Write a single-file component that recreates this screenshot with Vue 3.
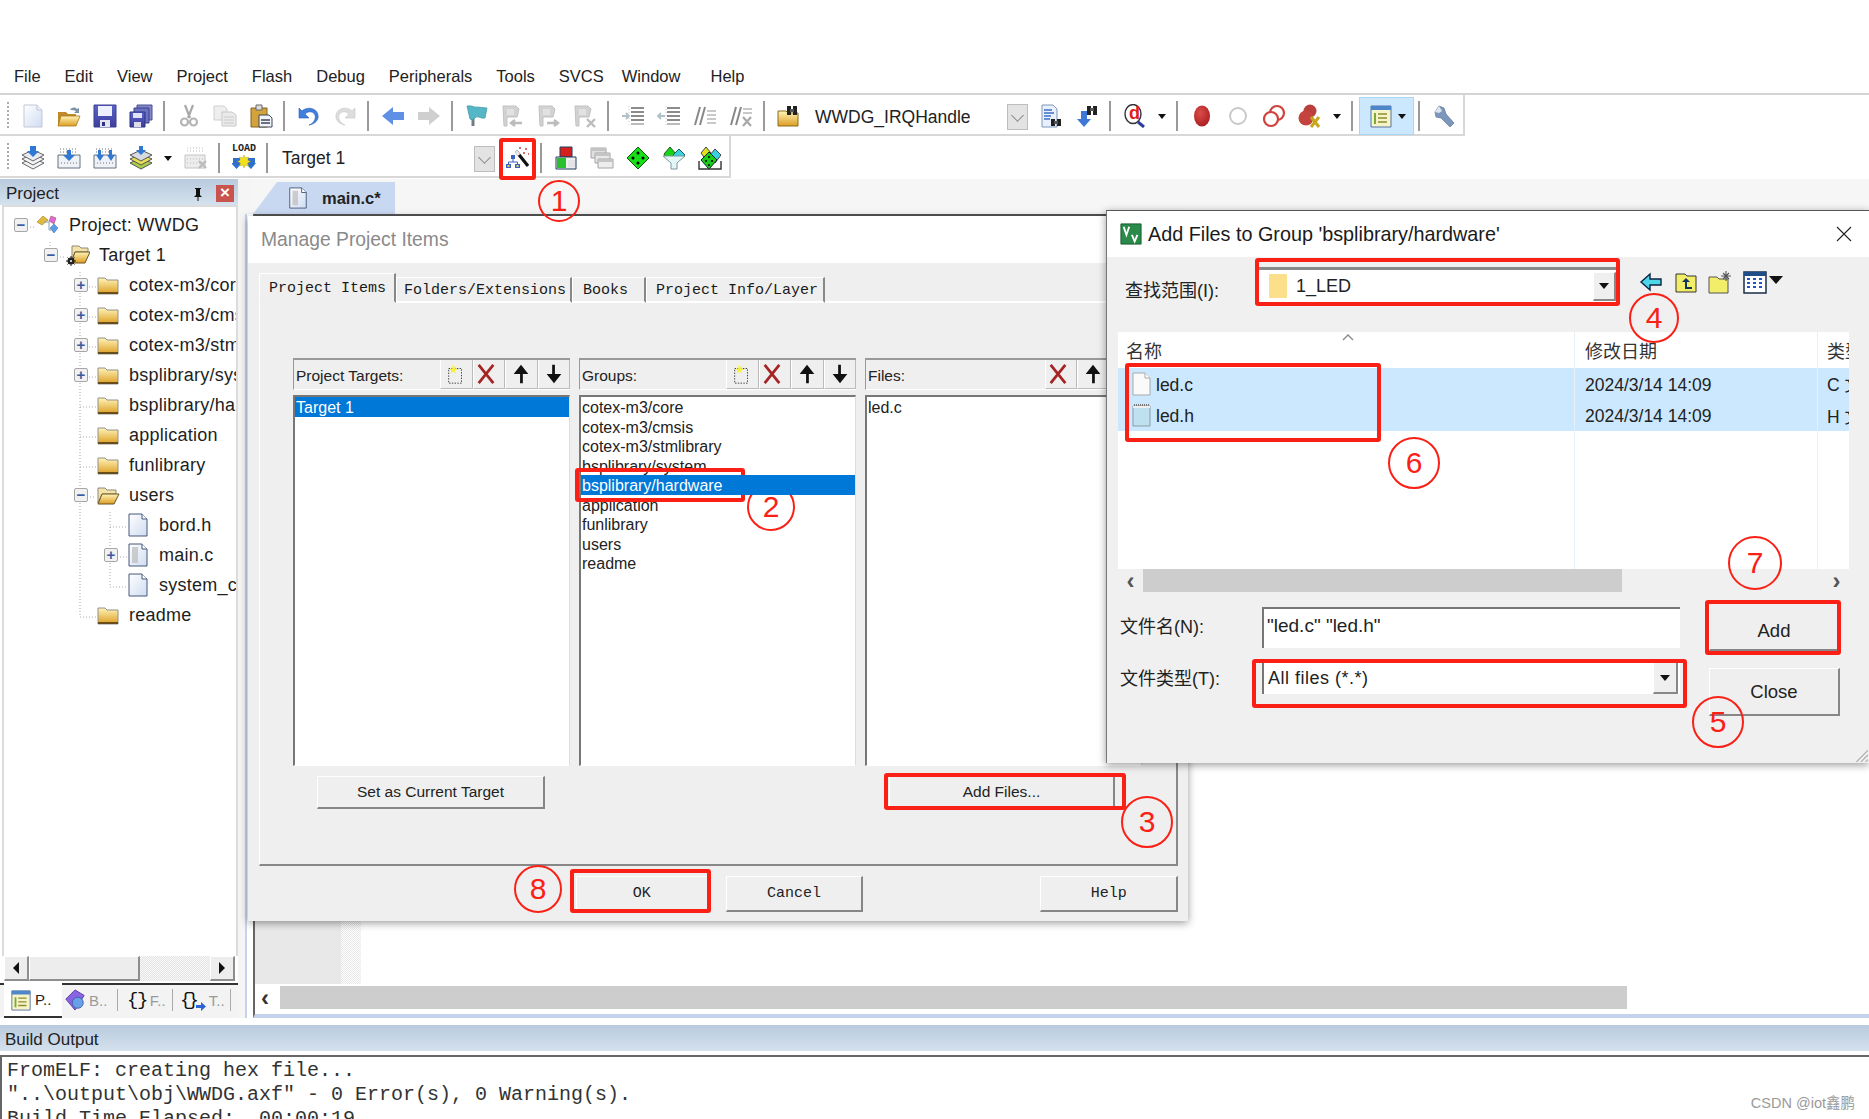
<template>
  <div class="page">
    <!-- icon sprite -->
    <svg class="sprite" width="0" height="0" aria-hidden="true">
      <defs>
        <linearGradient id="g-folder" x1="0" y1="0" x2="0" y2="1"><stop offset="0" stop-color="#fff4b8" /><stop offset="1" stop-color="#dd9d22" /></linearGradient>
        <linearGradient id="g-page" x1="0" y1="0" x2="1" y2="1"><stop offset="0" stop-color="#fff" /><stop offset="1" stop-color="#cfdcf2" /></linearGradient>
        <linearGradient id="g-save" x1="0" y1="0" x2="0" y2="1"><stop offset="0" stop-color="#5a63c8" /><stop offset="1" stop-color="#3e3f9c" /></linearGradient>
        <radialGradient id="g-bp" cx=".4" cy=".35" r=".7"><stop offset="0" stop-color="#dc4b48" /><stop offset="1" stop-color="#a81f20" /></radialGradient>
      </defs>
      <symbol id="i-new" viewBox="0 0 24 24"><path d="M3 1h13l5 5v17H3z" fill="url(#g-page)" stroke="#c3c7d2" /><path d="M16 1v5h5" fill="#eef" stroke="#c3c7d2" /></symbol>
      <symbol id="i-open" viewBox="0 0 24 24"><path d="M1 8h8l2 2h8v11H1z" fill="#c08a2c" /><path d="M4 12h19l-4 10H1z" fill="url(#g-folder)" stroke="#a87818" stroke-width=".8" /><path d="M13 6c2-3 5-3 7-1l2-1v5h-5l2-2c-2-1-4-1-6-1z" fill="#7f93a8" /></symbol>
      <symbol id="i-save" viewBox="0 0 24 24"><path d="M1 1h22v22H1z" fill="url(#g-save)" stroke="#3a3f8e" /><path d="M5 2h14v10H5z" fill="#eef0ff" /><path d="M7 16h10v7H7z" fill="#e4e4ee" /><path d="M9 18h3v4H9z" fill="#2d3483" /></symbol>
      <symbol id="i-saveall" viewBox="0 0 24 24"><path d="M8 1h15v15H8z" fill="#8288c8" stroke="#4a4f93" /><path d="M5 4h15v15H5z" fill="#6b72c2" stroke="#3a4088" /><path d="M1 8h15v15H1z" fill="url(#g-save)" stroke="#2d3483" /><path d="M4 9h9v5H4z" fill="#dfe2f8" /><path d="M5 18h7v5H5z" fill="#dcdcea" /></symbol>
      <symbol id="i-cut" viewBox="0 0 24 24"><path d="M8 1l5 13M16 1l-5 13" stroke="#a9a9a9" stroke-width="2.2" fill="none" /><circle cx="7.500" cy="18" r="3.500" fill="none" stroke="#b5b5b5" stroke-width="2.200" /><circle cx="16.500" cy="18" r="3.500" fill="none" stroke="#b5b5b5" stroke-width="2.200" /></symbol>
      <symbol id="i-copy" viewBox="0 0 24 24"><path d="M1 2h10l3 3v11H1z" fill="#eee" stroke="#d0d0d0" /><path d="M9 8h10l4 3v11H9z" fill="#ebebeb" stroke="#c8c8c8" /><path d="M11 13h10M11 16h10M11 19h10" stroke="#c9c9c9" /></symbol>
      <symbol id="i-paste" viewBox="0 0 24 24"><path d="M2 4h16v19H2z" fill="#d2a33c" stroke="#83631d" /><path d="M7 1h6v5H7z" fill="#ddd" stroke="#666" /><path d="M10 11h10l3 3v9H10z" fill="#f1f4fb" stroke="#3f4656" /><path d="M12 16h9M12 19h9" stroke="#3f4656" stroke-width="1.400" /></symbol>
      <symbol id="i-undo" viewBox="0 0 24 24"><path d="M8 10c5-5 12-1 10 5-1 3-3 5-6 6 6-1 10-5 9-10C20 4 10 2 5 7L2 4v10h10z" fill="#3f7fde" stroke="#2b5fb5" stroke-width=".6" /></symbol>
      <symbol id="i-redo" viewBox="0 0 24 24"><path d="M16 10c-5-5-12-1-10 5 1 3 3 5 6 6-6-1-10-5-9-10C4 4 14 2 19 7l3-3v10H12z" fill="#ddd" stroke="#c6c6c6" stroke-width=".6" /></symbol>
      <symbol id="i-back" viewBox="0 0 24 24"><path d="M1 12L12 3v5h11v8H12v5z" fill="#5f90e6" /></symbol>
      <symbol id="i-fwd" viewBox="0 0 24 24"><path d="M23 12L12 3v5H1v8h11v5z" fill="#cfcfcf" /></symbol>
      <symbol id="i-flag" viewBox="0 0 24 24"><path d="M8 12v10" stroke="#6f7d80" stroke-width="3" /><path d="M2 2c5-1 8 2 10 1l10 1-2 10c-4 1-6-2-9-1l-3 3-3-1z" fill="#55b7c6" stroke="#3b93a3" stroke-width=".7" /></symbol>
      <symbol id="i-flagl" viewBox="0 0 24 24"><path d="M2 2h13l3 3-2 8H6v9H3z" fill="#d2d2d2" stroke="#c2c2c2" /><path d="M6 5h7v6H6z" fill="#e2e2e2" /><path d="M21 19H11M14 16l-4 3 4 3" stroke="#bcbcbc" stroke-width="2.400" fill="none" /></symbol>
      <symbol id="i-flagr" viewBox="0 0 24 24"><path d="M2 2h13l3 3-2 8H6v9H3z" fill="#d2d2d2" stroke="#c2c2c2" /><path d="M6 5h7v6H6z" fill="#e2e2e2" /><path d="M10 19h10M17 16l4 3-4 3" stroke="#bcbcbc" stroke-width="2.400" fill="none" /></symbol>
      <symbol id="i-flagx" viewBox="0 0 24 24"><path d="M2 2h13l3 3-2 8H6v9H3z" fill="#d2d2d2" stroke="#c2c2c2" /><path d="M6 5h7v6H6z" fill="#e2e2e2" /><path d="M14 15l8 8M22 15l-8 8" stroke="#bcbcbc" stroke-width="2.400" /></symbol>
      <symbol id="i-indent" viewBox="0 0 24 24"><path d="M10 4h13M10 8h13M10 12h13M10 16h13" stroke="#8c8c8c" stroke-width="1.800" /><path d="M10 20h13" stroke="#b5b5b5" stroke-width="1.800" /><path d="M1 12h6M5 9l3 3-3 3" stroke="#b0c0c8" stroke-width="1.800" fill="none" /><path d="M8 2v20" stroke="#ccc" stroke-dasharray="1 2" /></symbol>
      <symbol id="i-outdent" viewBox="0 0 24 24"><path d="M10 4h13M10 8h13M10 12h13M10 16h13" stroke="#8c8c8c" stroke-width="1.800" /><path d="M10 20h13" stroke="#b5b5b5" stroke-width="1.800" /><path d="M8 12H2M4 9l-3 3 3 3" stroke="#b0c0c8" stroke-width="1.800" fill="none" /><path d="M9 2v20" stroke="#ccc" stroke-dasharray="1 2" /></symbol>
      <symbol id="i-comment" viewBox="0 0 24 24"><path d="M7 3L2 21M12 3L7 21" stroke="#888" stroke-width="2" /><path d="M14 7h9M14 11h9M14 15h9M14 19h9" stroke="#b8b8b8" stroke-width="1.600" /></symbol>
      <symbol id="i-uncomment" viewBox="0 0 24 24"><path d="M7 3L2 21M12 3L7 21" stroke="#888" stroke-width="2" /><path d="M14 5h9M14 9h9" stroke="#b8b8b8" stroke-width="1.600" /><path d="M14 13l8 9M22 13l-8 9" stroke="#a9a9a9" stroke-width="2.200" /></symbol>
      <symbol id="i-findfolder" viewBox="0 0 24 24"><path d="M1 7h8l2 2h10v13H1z" fill="url(#g-folder)" stroke="#8d6a1c" /><path d="M10 2h4v9h-4zM16 2h4v9h-4z" fill="#222" /><path d="M13 5h4v3h-4z" fill="#555" /></symbol>
      <symbol id="i-findpage" viewBox="0 0 24 24"><path d="M3 1h11l4 4v18H3z" fill="#e8f0fd" stroke="#7f95bb" /><path d="M5 6h8M5 9h10M5 12h7M5 15h6" stroke="#3d6fc4" stroke-width="1.400" /><path d="M12 15h4v7h-4zM18 15h4v7h-4z" fill="#222" /><path d="M15 17h4v3h-4z" fill="#555" /></symbol>
      <symbol id="i-findnext" viewBox="0 0 24 24"><path d="M3 8h6v8h4l-7 8-7-8h4z" fill="#3f77d8" transform="translate(3 -1)" /><path d="M12 2h4v9h-4zM18 2h4v9h-4z" fill="#222" /><path d="M15 4h4v3h-4z" fill="#555" /></symbol>
      <symbol id="i-debug" viewBox="0 0 24 24"><ellipse cx="10" cy="10" rx="8" ry="9.500" fill="#fff" stroke="#333" stroke-width="1.400" /><path d="M15 18l6 5" stroke="#2c3e9b" stroke-width="3" /></symbol>
      <symbol id="i-bp" viewBox="0 0 24 24"><ellipse cx="12" cy="12" rx="8" ry="10.500" fill="url(#g-bp)" /></symbol>
      <symbol id="i-bpoff" viewBox="0 0 24 24"><circle cx="12" cy="12" r="8" fill="#fff" stroke="#c9c9c9" stroke-width="2" /></symbol>
      <symbol id="i-bps" viewBox="0 0 24 24"><circle cx="15" cy="9" r="7" fill="#fff" stroke="#d0423c" stroke-width="2.200" /><circle cx="9" cy="15" r="7" fill="#fff" stroke="#d0423c" stroke-width="2.200" /></symbol>
      <symbol id="i-bpx" viewBox="0 0 24 24"><circle cx="12" cy="7" r="6.500" fill="#b9403c" /><circle cx="8" cy="14" r="7.500" fill="#c4433e" /><path d="M13 13l8 10M21 13l-8 10" stroke="#c9a71d" stroke-width="3" /></symbol>
      <symbol id="i-window" viewBox="0 0 24 24"><path d="M2 2h20v21H2z" fill="#f6f3c8" stroke="#5874a4" /><path d="M2 2h20v4H2z" fill="#4d86c9" /><path d="M5 9h2v11H5z" fill="#7ca83a" /><path d="M9 10h9M9 14h9M9 18h9" stroke="#8a8f2e" stroke-width="1.400" /></symbol>
      <symbol id="i-wrench" viewBox="0 0 24 24"><path d="M3 8l4-6 5 2 2 6 8 9-4 4-9-9-5-1z" fill="#7c97bb" stroke="#5c7698" stroke-width=".7" /><path d="M7 2l3 5-3 2-4-1" fill="#fff" opacity=".75" /></symbol>
      <symbol id="i-translate" viewBox="0 0 24 24"><path d="M12 12l11 5-11 6L1 17z" fill="#f2f4f6" stroke="#666" /><path d="M12 8l11 5-11 6L1 13z" fill="#f2f4f6" stroke="#666" /><path d="M12 4l11 5-11 6L1 9z" fill="#e8ecf0" stroke="#666" /><path d="M9 0h6v5h3l-6 6-6-6h3z" fill="#2f78d4" /></symbol>
      <symbol id="i-build" viewBox="0 0 24 24"><path d="M1 9h22v13H1z" fill="#eef1f5" stroke="#69727f" /><path d="M3 3h18M3 6h18M4 17h16" stroke="#6d7480" stroke-dasharray="1 2" /><path d="M10 4h4v5h4l-6 6-6-6h4z" fill="#2f78d4" /></symbol>
      <symbol id="i-rebuild" viewBox="0 0 24 24"><path d="M1 9h22v13H1z" fill="#eef1f5" stroke="#69727f" /><path d="M3 3h18M3 6h18M4 17h16" stroke="#6d7480" stroke-dasharray="1 2" /><path d="M5 4h3v5h3l-4 6-4-6h2zM16 4h3v5h3l-4 6-4-6h2z" fill="#2f78d4" /></symbol>
      <symbol id="i-batch" viewBox="0 0 24 24"><path d="M12 12l11 5-11 6L1 17z" fill="#a8cc4a" stroke="#555" /><path d="M12 8l11 5-11 6L1 13z" fill="#e8dd55" stroke="#555" /><path d="M12 4l11 5-11 6L1 9z" fill="#d6dbe0" stroke="#555" /><path d="M10 0h4v4h3l-5 5-5-5h3z" fill="#2f78d4" /></symbol>
      <symbol id="i-stop" viewBox="0 0 24 24"><path d="M1 9h20v13H1z" fill="#ececec" stroke="#c4c4c4" /><path d="M3 2h18M3 5h18M3 13h16M3 17h16" stroke="#bcbcbc" stroke-dasharray="1 2" /><path d="M15 15l7 7M22 15l-7 7" stroke="#bbb" stroke-width="2.400" /></symbol>
      <symbol id="i-load" viewBox="0 0 24 24"><path d="M1 12h7v5h2l-5.500 6L-1 17h2zM16 12h7v5h1l-5 6-6-6h3z" fill="#2f6fd0" /><path d="M12 9l1.500 3 3-1-1 3 3 1.500-3 1.500 1 3-3-1-1.500 3-1.500-3-3 1 1-3-3-1.500 3-1.500-1-3 3 1z" fill="#f3e01c" stroke="#a79a10" stroke-width=".4" /></symbol>
      <symbol id="i-wand" viewBox="0 0 24 24"><path d="M10 5l12 15" stroke="#111" stroke-width="3.200" /><path d="M10 5l3 4" stroke="#e8e8e8" stroke-width="3.200" /><path d="M13 2h2M19 3h2M17 7h2M22 8h1" stroke="#d63a3a" stroke-width="1.600" /><path d="M5 9h4v4H5zM0 18h5v4H0zM9 18h5v4H9z" fill="#3a62c6" /><path d="M7 13v3M2.500 18v-2h9v2" stroke="#3a62c6" fill="none" /><path d="M1.500 19h2v2h-2zM10.500 19h2v2h-2z" fill="#e8d94a" /></symbol>
      <symbol id="i-comps" viewBox="0 0 24 24"><path d="M6 1h12v10H6z" fill="#d62020" stroke="#1f3c5c" /><path d="M2 11h20v12H2z" fill="#eee" stroke="#1f3c5c" /><path d="M3 12h9v10H3z" fill="#2bc02b" /><path d="M14 14h7v7h-7z" fill="#e3e3e8" /></symbol>
      <symbol id="i-stack" viewBox="0 0 24 24"><path d="M1 2h15v10H1z" fill="#e0e0e0" stroke="#a4a4a4" /><path d="M5 7h15v10H5z" fill="#e8e8e8" stroke="#a4a4a4" /><path d="M8 13h15v9H8z" fill="#ededed" stroke="#a4a4a4" /><path d="M1 2h15v3H1zM5 7h15v3H5zM8 13h15v3H8z" fill="#c4c4c4" /></symbol>
      <symbol id="i-gem" viewBox="0 0 24 24"><path d="M12 1l11 11-11 11L1 12z" fill="#18e018" stroke="#145214" /><circle cx="12" cy="7" r="1.500" /><circle cx="7" cy="12" r="1.500" /><circle cx="17" cy="12" r="1.500" /><circle cx="12" cy="17" r="1.500" /></symbol>
      <symbol id="i-funnel" viewBox="0 0 24 24"><path d="M8 1l6 7-5 4H4L2 8z" fill="#17d417" stroke="#185a18" /><path d="M17 3l6 6-3 3h-8l-1-3z" fill="#37d2e0" stroke="#185a5a" /><path d="M1 10h22l-8 7v6H9v-6z" fill="#e4f6f7" stroke="#7d9a9c" /></symbol>
      <symbol id="i-multi" viewBox="0 0 24 24"><path d="M8 1l5 6-5 7-5-7z" fill="#e0e020" stroke="#444" /><path d="M17 3l6 6-6 8-5-8z" fill="#37d2e0" stroke="#444" /><path d="M11 6l8 8-8 9-8-9z" fill="#18cc18" stroke="#123" /><path d="M1 15v8h22v-8" fill="none" stroke="#333" stroke-width="1.400" /><circle cx="11" cy="11" r="1" /><circle cx="8" cy="15" r="1" /><circle cx="14" cy="15" r="1" /><circle cx="11" cy="19" r="1" /></symbol>
      <symbol id="i-proj" viewBox="0 0 24 24"><path d="M1 9l6-6 5 4-6 5z" fill="#e2b93c" stroke="#9c7f20" stroke-width=".6" /><path d="M15 3l5 2-2 6-5-3z" fill="#dc6bd8" stroke="#944" stroke-width=".5" /><path d="M14 15l4-4 4 4-4 5z" fill="#5c9ce8" stroke="#36689e" stroke-width=".5" /><path d="M8 9h5v8h2" fill="none" stroke="#8aa0b8" /></symbol>
      <symbol id="i-folder" viewBox="0 0 24 24"><path d="M2 5h7l2 2h11v14H2z" fill="url(#g-folder)" stroke="#92918a" /><path d="M2 20h20" stroke="#4f3a12" stroke-width="1.600" /></symbol>
      <symbol id="i-folderopen" viewBox="0 0 24 24"><path d="M2 5h7l2 2h9v4H6L2 20z" fill="#f4e3a8" stroke="#8d8a7a" /><path d="M6 11h17l-5 10H2z" fill="url(#g-folder)" stroke="#6b5420" /></symbol>
      <symbol id="i-target" viewBox="0 0 24 24"><path d="M6 3h7l2 2h7v4H9L6 16z" fill="#f4e3a8" stroke="#8d8a7a" /><path d="M9 9h15l-5 11H5z" fill="url(#g-folder)" stroke="#6b5420" /><circle cx="5" cy="18" r="3.500" fill="#222" /><path d="M5 13v10M0 18h10M1.500 14.500l7 7M8.500 14.500l-7 7" stroke="#222" /><circle cx="5" cy="18" r="1" fill="#fff" /></symbol>
      <symbol id="i-file" viewBox="0 0 24 24"><path d="M3 1h13l5 5v17H3z" fill="url(#g-page)" stroke="#46597a" /><path d="M16 1v5h5" fill="#fff" stroke="#46597a" /></symbol>
      <symbol id="i-filec" viewBox="0 0 24 24"><path d="M3 1h13l5 5v17H3z" fill="url(#g-page)" stroke="#46597a" /><path d="M16 1v5h5" fill="#fff" stroke="#46597a" /><path d="M6 4h6v16H6z" fill="#bbb" opacity=".7" /></symbol>
      <symbol id="i-book" viewBox="0 0 24 24"><path d="M2 11L12 1l10 6-10 16z" fill="#8a63e0" stroke="#5a36a8" /><circle cx="15" cy="15" r="6" fill="#6aa0e8" stroke="#3d5fa8" /></symbol>
      <symbol id="i-back2" viewBox="0 0 24 24"><path d="M2 12l9-8v5h11v6H11v5z" fill="#4cd6e8" stroke="#0c2240" stroke-width="1.400" /></symbol>
      <symbol id="i-up2" viewBox="0 0 24 24"><path d="M2 4h9l2 2h9v16H2z" fill="#f3ee6a" stroke="#333" /><path d="M12 8l4 4h-3v5h5v2h-7v-7H8z" fill="#12355c" /></symbol>
      <symbol id="i-new2" viewBox="0 0 24 24"><path d="M1 7h8l2 2h9v14H1z" fill="#f3ee6a" stroke="#555" /><path d="M18 1v10M13 6h10M15 3l6 6M21 3l-6 6" stroke="#555" stroke-width="1.100" /></symbol>
      <symbol id="i-view2" viewBox="0 0 24 24"><path d="M1 2h22v21H1z" fill="#fff" stroke="#1a2d4a" stroke-width="1.500" /><path d="M1 2h22v4H1z" fill="#1f4d8a" /><path d="M4 9h3M10 9h3M16 9h3M4 13h3M10 13h3M16 13h3M4 17h3M10 17h3M16 17h3" stroke="#2452c8" stroke-width="2" /></symbol>
      <symbol id="i-uv" viewBox="0 0 24 24"><path d="M1 1h22v22H1z" fill="#2a8a4a" stroke="#145a2c" /><path d="M4 4l3 9 3-9M13 13l3 7 3-7" stroke="#fff" stroke-width="2" fill="none" /></symbol>
      <symbol id="i-blank" viewBox="0 0 24 24"><path d="M4 1h12l5 5v17H4z" fill="#fafafa" stroke="#a9a9a9" /><path d="M16 1v5h5" fill="#fff" stroke="#a9a9a9" /></symbol>
      <symbol id="i-note" viewBox="0 0 24 24"><path d="M4 3h17v20H4z" fill="#bfe0ee" stroke="#8a9da8" /><path d="M4 3h17v2H4z" fill="#eee" /><path d="M5 2h15" stroke="#777" stroke-dasharray="1 1" stroke-width="2" /></symbol>
      <symbol id="i-add" viewBox="0 0 24 24"><path d="M4 6h14v16H4z" fill="none" stroke="#333" stroke-dasharray="1.500 1.500" /><path d="M8 1l1.500 4L13 3l-2 3 4 1-4 1 1 4-3-3-3 3 1-4-3-1 4-1z" fill="#f6f040" /></symbol>
    </svg>

    <nav class="menu">
      <span v-for="m in menus" :key="m">{{ m }}</span>
    </nav>

    <div class="toolbar tb1">
      <template v-for="(it, i) in toolbar1" :key="i">
        <i v-if="it === '|'" class="sep"></i>
        <i v-else-if="it === 'v'" class="drop"></i>
        <div v-else-if="it === 'func'" class="combo func">
          <span>WWDG_IRQHandle</span><b class="combo-btn"><em></em></b>
        </div>
        <div v-else-if="it === 'hl'" class="hl">
          <svg class="ic"><use href="#i-window" /></svg><i class="drop"></i>
        </div>
        <span v-else class="tool">
          <svg class="ic"><use :href="'#i-' + it" /></svg>
          <span v-if="it === 'debug'" class="dbg-d">d</span>
        </span>
      </template>
    </div>
    <div class="toolbar tb2">
      <template v-for="(it, i) in toolbar2" :key="i">
        <i v-if="it === '|'" class="sep"></i>
        <i v-else-if="it === 'v'" class="drop"></i>
        <div v-else-if="it === 'target'" class="combo target">
          <span>Target 1</span><b class="combo-btn"><em></em></b>
        </div>
        <span v-else class="tool">
          <svg class="ic"><use :href="'#i-' + it" /></svg>
          <span v-if="it === 'load'" class="load-txt">LOAD</span>
        </span>
      </template>
    </div>

    <div class="workspace">
      <aside class="side">
        <header class="pane-head">
          <span>Project</span>
          <svg class="pin" viewBox="0 0 14 14"><path d="M4 1h6v1H9v6l2 2H3l2-2V2H4zM6.500 10h1v4h-1z" fill="#111" /></svg>
          <b class="side-x">×</b>
        </header>
        <div class="tree">
          <svg class="tree-lines" width="236" height="440">
            <path d="M27 18h8M50 33v12M57 48h8M80 63v345M80 78h16M80 108h16M80 138h16M80 168h16M80 198h16M80 228h16M80 258h16M80 408h16M87 288h9M110 303v75M110 318h17M117 348h10M110 378h17" stroke="#a8a8a8" stroke-dasharray="1 2" fill="none" />
          </svg>
          <div v-for="row in tree" :key="row.label" class="tree-row" :style="{ paddingLeft: 14 + row.level * 30 + 'px' }">
            <span class="exp" :class="{ on: row.exp }">{{ row.exp === 'minus' ? '−' : row.exp === 'plus' ? '+' : '' }}</span>
            <svg class="tree-ic"><use :href="'#i-' + row.icon" /></svg>
            <span class="tree-label">{{ row.label }}</span>
          </div>
        </div>
        <div class="side-scroll">
          <b class="sb-btn"><em class="tri-l"></em></b>
          <b class="sb-thumb"></b>
          <span class="sb-track"></span>
          <b class="sb-btn"><em class="tri-r"></em></b>
        </div>
        <div class="side-tabs">
          <span class="stab active"><svg class="ic-s"><use href="#i-window" /></svg><em class="dark">P..</em></span>
          <span class="stab"><svg class="ic-s"><use href="#i-book" /></svg><em>B..</em></span>
          <span class="stab"><strong>{}</strong><em>F..</em></span>
          <span class="stab last"><strong class="narrow">{}</strong><svg class="mini-arrow" viewBox="0 0 10 9"><path d="M0 3h5V0l5 4.500L5 9V6H0z" fill="#2d62d6" /></svg><em>T..</em></span>
        </div>
      </aside>

      <main class="editor">
        <div class="edit-tabs">
          <div class="edit-tab"><svg class="ic-doc"><use href="#i-filec" /></svg><span>main.c*</span></div>
        </div>
        <div class="edit-frame">
          <div class="edit-body"><div class="gutter"></div><div class="dither"></div></div>
          <div class="edit-scroll"><span class="chev">‹</span><b class="edit-thumb"></b></div>
        </div>
      </main>
    </div>

    <section class="build">
      <header class="build-head">Build Output</header>
      <pre class="build-text">FromELF: creating hex file...
"..\output\obj\WWDG.axf" - 0 Error(s), 0 Warning(s).
Build Time Elapsed:  00:00:19</pre>
      <span class="mark">CSDN @iot鑫鹏</span>
    </section>

    <!-- Manage Project Items window -->
    <div class="win manage">
      <header class="manage-title">Manage Project Items</header>
      <div class="manage-body">
        <div class="mtabs">
          <span v-for="(t, i) in mtabs" :key="t.text" class="mtab" :class="{ active: i === 0 }" :style="{ width: t.w + 'px' }">{{ t.text }}</span>
          <i class="mtab-rest"></i>
        </div>
        <div class="mpane">
          <div class="cols">
            <div v-for="c in columns" :key="c.title" class="col">
              <div class="col-head">
                <span>{{ c.title }}</span>
                <div class="col-btns">
                  <b v-if="c.add"><svg class="ic-b"><use href="#i-add" /></svg></b>
                  <b class="del"><svg class="ic-b" viewBox="0 0 24 24"><path d="M4 2l16 20M20 2L4 22" stroke="#a52424" stroke-width="3" /></svg></b>
                  <b><svg class="ic-b" viewBox="0 0 24 24"><path d="M12 2l8 10h-6v10h-3V12H4z" fill="#111" /></svg></b>
                  <b><svg class="ic-b" viewBox="0 0 24 24"><path d="M12 22L4 12h6V2h3v10h7z" fill="#111" /></svg></b>
                </div>
              </div>
              <ul class="list">
                <li v-for="r in c.rows" :key="r" :class="{ sel: r === c.sel }">{{ r }}</li>
              </ul>
            </div>
            <button class="btn set">Set as Current Target</button>
            <i></i>
            <button class="btn addf">Add Files...</button>
          </div>
        </div>
        <div class="mfoot">
          <button class="btn mono ok">OK</button>
          <button class="btn mono cancel">Cancel</button>
          <button class="btn mono help">Help</button>
        </div>
      </div>
    </div>

    <!-- Add Files window -->
    <div class="win addwin">
      <header class="add-title">
        <svg class="uv"><use href="#i-uv" /></svg>
        <span>Add Files to Group 'bsplibrary/hardware'</span>
        <svg class="close-x" viewBox="0 0 16 16"><path d="M1 1l14 14M15 1L1 15" stroke="#222" stroke-width="1.100" /></svg>
      </header>
      <div class="add-body">
        <div class="look">
          <label>查找范围(I):</label>
          <div class="look-box">
            <i class="yellow"></i><span>1_LED</span>
            <b class="arrow-btn"><em></em></b>
          </div>
          <svg class="ic-n"><use href="#i-back2" /></svg>
          <svg class="ic-n"><use href="#i-up2" /></svg>
          <svg class="ic-n"><use href="#i-new2" /></svg>
          <svg class="ic-n"><use href="#i-view2" /></svg>
          <em class="tri-d"></em>
        </div>
        <div class="files">
          <div class="fhead">
            <span class="c1">名称<svg class="caret" viewBox="0 0 12 7"><path d="M1 6l5-5 5 5" fill="none" stroke="#888" stroke-width="1.300" /></svg></span>
            <span class="c2">修改日期</span>
            <span class="c3">类型</span>
          </div>
          <div v-for="f in files" :key="f.name" class="frow">
            <span class="c1"><svg class="fic"><use :href="'#i-' + f.icon" /></svg><span class="ftxt">{{ f.name }}</span></span>
            <span class="c2"><span class="ftxt">2024/3/14 14:09</span></span>
            <span class="c3"><span class="ftxt">{{ f.type }}</span></span>
          </div>
          <div class="fempty"><i></i><i></i></div>
        </div>
        <div class="hbar"><span>‹</span><b></b><span>›</span></div>
        <div class="form">
          <div class="form-left">
            <div class="frm">
              <label>文件名(N):</label>
              <div class="input">"led.c" "led.h"</div>
            </div>
            <div class="frm second">
              <label>文件类型(T):</label>
              <div class="select"><span>All files (*.*)</span><b class="arrow-btn"><em></em></b></div>
            </div>
          </div>
          <div class="form-right">
            <button class="btn big add">Add</button>
            <button class="btn big">Close</button>
          </div>
        </div>
        <svg class="grip" viewBox="0 0 14 14"><path d="M13 3L3 13M13 7l-6 6M13 11l-2 2" stroke="#aaa" /></svg>
      </div>
    </div>

    <!-- red annotations drawn over the screenshot -->
    <i v-for="(b, i) in boxes" :key="'b' + i" class="rbox" :style="{ left: b[0] + 'px', top: b[1] + 'px', width: b[2] - b[0] + 'px', height: b[3] - b[1] + 'px' }"></i>
    <span v-for="c in circles" :key="c.n" class="rnum" :style="{ left: c.x - c.r + 'px', top: c.y - c.r + 'px', width: c.r * 2 + 'px', height: c.r * 2 + 'px' }">{{ c.n }}</span>
  </div>
</template>

<script setup>
const menus = ['File', 'Edit', 'View', 'Project', 'Flash', 'Debug', 'Peripherals', 'Tools', 'SVCS', 'Window', 'Help']

const toolbar1 = [
  'new', 'open', 'save', 'saveall', '|', 'cut', 'copy', 'paste', '|', 'undo', 'redo', '|', 'back', 'fwd', '|',
  'flag', 'flagl', 'flagr', 'flagx', '|', 'indent', 'outdent', 'comment', 'uncomment', '|', 'findfolder', 'func',
  'findpage', 'findnext', '|', 'debug', 'v', '|', 'bp', 'bpoff', 'bps', 'bpx', 'v', '|', 'hl', '|', 'wrench',
]
const toolbar2 = [
  'translate', 'build', 'rebuild', 'batch', 'v', 'stop', '|', 'load', '|', 'target', 'wand', '|',
  'comps', 'stack', 'gem', 'funnel', 'multi',
]

const tree = [
  { level: 0, exp: 'minus', icon: 'proj', label: 'Project: WWDG' },
  { level: 1, exp: 'minus', icon: 'target', label: 'Target 1' },
  { level: 2, exp: 'plus', icon: 'folder', label: 'cotex-m3/core' },
  { level: 2, exp: 'plus', icon: 'folder', label: 'cotex-m3/cmsis' },
  { level: 2, exp: 'plus', icon: 'folder', label: 'cotex-m3/stmlibrary' },
  { level: 2, exp: 'plus', icon: 'folder', label: 'bsplibrary/system' },
  { level: 2, exp: '', icon: 'folder', label: 'bsplibrary/hardware' },
  { level: 2, exp: '', icon: 'folder', label: 'application' },
  { level: 2, exp: '', icon: 'folder', label: 'funlibrary' },
  { level: 2, exp: 'minus', icon: 'folderopen', label: 'users' },
  { level: 3, exp: '', icon: 'file', label: 'bord.h' },
  { level: 3, exp: 'plus', icon: 'filec', label: 'main.c' },
  { level: 3, exp: '', icon: 'file', label: 'system_core.c' },
  { level: 2, exp: '', icon: 'folder', label: 'readme' },
]

const mtabs = [
  { text: 'Project Items', w: 137 },
  { text: 'Folders/Extensions', w: 176 },
  { text: 'Books', w: 74 },
  { text: 'Project Info/Layer', w: 179 },
]

const columns = [
  { title: 'Project Targets:', add: true, rows: ['Target 1'], sel: 'Target 1' },
  {
    title: 'Groups:',
    add: true,
    rows: ['cotex-m3/core', 'cotex-m3/cmsis', 'cotex-m3/stmlibrary', 'bsplibrary/system', 'bsplibrary/hardware', 'application', 'funlibrary', 'users', 'readme'],
    sel: 'bsplibrary/hardware',
  },
  { title: 'Files:', add: false, rows: ['led.c'], sel: '' },
]

const files = [
  { name: 'led.c', icon: 'blank', type: 'C 文件' },
  { name: 'led.h', icon: 'note', type: 'H 文件' },
]

const boxes = [
  [499, 138, 536, 180],
  [575, 468, 745, 502],
  [884, 773, 1126, 810],
  [1255, 258, 1620, 306],
  [1125, 363, 1381, 442],
  [1705, 600, 1841, 655],
  [1252, 659, 1687, 708],
  [570, 869, 711, 913],
]

const circles = [
  { n: 1, x: 559, y: 201, r: 21 },
  { n: 2, x: 771, y: 507, r: 24 },
  { n: 3, x: 1147, y: 822, r: 26 },
  { n: 4, x: 1654, y: 318, r: 25 },
  { n: 5, x: 1718, y: 722, r: 26 },
  { n: 6, x: 1414, y: 463, r: 26 },
  { n: 7, x: 1755, y: 563, r: 27 },
  { n: 8, x: 538, y: 889, r: 24 },
]
</script>

<style>
html, body { margin: 0; background: #fff; }
</style>

<style scoped>
.page {
  position: relative;
  width: 1869px;
  height: 1119px;
  overflow: hidden;
  display: flex;
  flex-direction: column;
  background: #fff;
  font-family: "Liberation Sans", "Noto Sans CJK SC", sans-serif;
  color: #222;
}
.sprite { position: absolute; }
i, em, b { font-style: normal; display: block; }

.menu {
  margin-top: 60px;
  height: 35px;
  display: flex;
  align-items: center;
  gap: 24px;
  padding-left: 14px;
  font-size: 16.500px;
  border-bottom: 2px solid #d4d4d4;
  box-sizing: border-box;
}
.menu span:nth-child(10) { margin-left: -6px; }
.menu span:nth-child(11) { margin-left: 6px; }

.toolbar {
  display: flex;
  align-items: center;
  height: 41px;
  padding-left: 15px;
  padding-top: 3px;
  box-sizing: border-box;
  border-bottom: 2px solid #d8d8d8;
  border-right: 2px solid #d8d8d8;
  background-image: repeating-linear-gradient(#aaa 0 2px, transparent 2px 4px);
  background-size: 2px 26px;
  background-repeat: no-repeat;
  background-position: 7px 7px;
}
.tb1 { width: 1465px; }
.tb2 { width: 731px; height: 42px; }
.tool { position: relative; width: 36px; height: 36px; display: flex; align-items: center; justify-content: center; flex: none; }
.ic { width: 24px; height: 24px; display: block; }
.dbg-d {
  position: absolute;
  left: 12px;
  top: 5px;
  font-size: 18px;
  line-height: 20px;
  font-weight: 700;
  color: #e21b1b;
}
.load-txt {
  position: absolute;
  left: 0;
  right: 0;
  top: 3px;
  text-align: center;
  font: 700 10px/11px "Liberation Mono", monospace;
  color: #222;
}
.sep { width: 12px; height: 30px; flex: none; background: linear-gradient(#9a9a9a, #9a9a9a) 4px 0 / 2px 100% no-repeat; }
.drop { width: 19px; flex: none; position: relative; height: 10px; }
.drop::after {
  content: "";
  position: absolute;
  left: 5px;
  top: 3px;
  border: 4.500px solid transparent;
  border-top: 5px solid #111;
  border-bottom: 0;
}
.combo { display: flex; align-items: center; flex: none; font-size: 17.500px; position: relative; }
.combo > span { padding-top: 2px; }
.func { width: 226px; padding-left: 8px; box-sizing: border-box; }
.target { width: 226px; padding-left: 8px; box-sizing: border-box; }
.combo-btn {
  position: absolute;
  right: 5px;
  top: 50%;
  margin-top: -12px;
  width: 21px;
  height: 26px;
  background: #e3e3e3;
  border: 1px solid #bdbdbd;
  box-sizing: border-box;
}
.combo-btn em {
  width: 8px;
  height: 8px;
  border: solid #888;
  border-width: 0 1.500px 1.500px 0;
  transform: rotate(45deg);
  margin: 6px auto 0;
}
.hl {
  display: flex;
  align-items: center;
  width: 55px;
  height: 38px;
  flex: none;
  padding-left: 9px;
  box-sizing: border-box;
  background: #cbe8ff;
  border: 1px solid #a9d5f7;
}
.hl .drop { width: 19px; }

.workspace { flex: none; height: 839px; display: flex; margin-top: 1px; background: #f5f5f5; }
.side { width: 238px; flex: none; display: flex; flex-direction: column; background: #fff; }
.pane-head, .build-head { background: linear-gradient(#b8cbdd, #d5e1ee); }
.pane-head {
  height: 26px;
  display: flex;
  align-items: center;
  padding: 3px 4px 0 6px;
  box-sizing: border-box;
  font-size: 17px;
}
.pane-head span { flex: 1; }
.pin { width: 14px; height: 14px; margin-right: 11px; }
.side-x {
  width: 18px;
  height: 17px;
  background: #c9534f;
  color: #fff;
  font-size: 17px;
  line-height: 16px;
  text-align: center;
  font-weight: 700;
}
.tree {
  position: relative;
  flex: 1;
  overflow: hidden;
  margin-left: 2px;
  border: 2px solid #dcdcdc;
  border-width: 2px 2px 0 2px;
  box-sizing: border-box;
  padding-top: 3px;
}
.tree-lines { position: absolute; left: -4px; top: 2px; }
.tree-row {
  position: relative;
  height: 30px;
  display: flex;
  align-items: center;
  white-space: nowrap;
  font-size: 18px;
  letter-spacing: .25px;
  color: #1e1e1e;
  margin-left: -4px;
}
.exp {
  width: 14px;
  height: 14px;
  flex: none;
  margin-right: 8px;
  box-sizing: border-box;
  font-size: 15px;
  line-height: 11px;
  text-align: center;
  color: #3c5a9e;
  font-weight: 700;
}
.exp.on { background: #f1f1f1; border: 1.500px solid #a6a6a6; border-radius: 2px; }
.tree-ic { width: 24px; height: 24px; flex: none; margin-right: 9px; }
.side-scroll { height: 25px; display: flex; margin: 0 3px 2px 4px; background: #f1f1f1; flex: none; }
.sb-btn, .sb-thumb {
  background: #ededed;
  border: solid;
  border-width: 1px 2px 2px 1px;
  border-color: #fff #8e8e8e #8e8e8e #fff;
  box-sizing: border-box;
  flex: none;
}
.sb-btn { width: 25px; display: flex; align-items: center; justify-content: center; }
.sb-thumb { width: 111px; }
.sb-track {
  flex: 1;
  background: repeating-conic-gradient(#e4e4e4 0 25%, #f8f8f8 0 50%) 0 0 / 2px 2px;
}
.tri-l, .tri-r { width: 0; height: 0; border: 6px solid transparent; }
.tri-l { border-right: 6px solid #111; border-left: 0; }
.tri-r { border-left: 6px solid #111; border-right: 0; }
.side-tabs {
  height: 35px;
  flex: none;
  display: flex;
  align-items: center;
  padding: 0 0 3px 4px;
  border-top: 2px solid #333;
  box-sizing: border-box;
  background: #f3f3f3;
  font-size: 15px;
}
.stab {
  display: flex;
  align-items: center;
  gap: 3px;
  flex: none;
  box-sizing: border-box;
  border-right: 1px solid #aaa;
  height: 22px;
}
.stab:nth-child(1) { width: 58px; padding-left: 6px; border: 0; height: 35px; background: #fff; margin-top: 1px; border-bottom: 2px solid #333; }
.stab:nth-child(2) { width: 56px; padding-left: 2px; }
.stab:nth-child(3) { width: 55px; padding-left: 9px; }
.stab:nth-child(4) { width: 58px; padding-left: 7px; }
.stab em { color: #9a9a9a; }
.stab em.dark { color: #222; }
.stab strong { font-weight: 400; font-size: 19px; color: #111; font-family: "Liberation Mono", monospace; letter-spacing: -1.500px; }
.stab strong.narrow { letter-spacing: -4px; }
.ic-s { width: 22px; height: 22px; }
.mini-arrow { width: 10px; height: 9px; margin: 12px 0 0 -2px; }

.editor { flex: 1; min-width: 0; display: flex; flex-direction: column; margin-left: 15px; }
.edit-tabs { height: 35px; flex: none; padding-top: 3px; box-sizing: border-box; background: #f6f6f6; }
.edit-tab {
  width: 142px;
  height: 32px;
  display: flex;
  align-items: center;
  padding-left: 34px;
  box-sizing: border-box;
  background: #c9d8f1;
  clip-path: polygon(24px 0, 100% 0, 100% 100%, 0 100%);
  font-size: 16.500px;
  font-weight: 700;
}
.ic-doc { width: 22px; height: 22px; margin-right: 13px; }
.edit-frame {
  flex: 1;
  display: flex;
  flex-direction: column;
  border-top: 2px solid #555;
  border-left: 2px solid #666;
  border-bottom: 4px solid #c5d4ec;
  box-sizing: border-box;
  background: #fff;
  box-shadow: -6px 0 0 0 #fff, -8px 0 0 0 #c5d4ec;
}
.edit-body { flex: 1; display: flex; background: #fff; }
.gutter { width: 86px; background: #e8e8e8; }
.dither { width: 20px; background: repeating-conic-gradient(#e8e8e8 0 25%, #fff 0 50%) 0 0 / 2px 2px; }
.edit-scroll { height: 23px; margin: 2px 0 5px; display: flex; align-items: center; background: #fff; padding-left: 6px; }
.chev { width: 19px; font-size: 24px; line-height: 18px; color: #333; font-weight: 700; }
.edit-thumb { width: 1347px; height: 23px; background: #cdcdcd; }

.build { position: relative; margin-top: 7px; flex: 1; min-height: 0; }
.build-head { height: 26px; line-height: 29px; padding-left: 5px; font-size: 17px; }
.build-text {
  margin: 4px 0 0;
  height: 70px;
  border-top: 2px solid #666;
  border-left: 2px solid #666;
  padding: 2px 0 0 5px;
  font: 20px/24px "Liberation Mono", monospace;
  color: #333;
  overflow: hidden;
}
.mark {
  position: absolute;
  right: 14px;
  bottom: 7px;
  font-size: 14.500px;
  color: #9a9a9a;
}

.win {
  position: absolute;
  box-sizing: border-box;
  box-shadow: 0 2px 8px rgba(0, 0, 0, .4);
  background: #f0f0f0;
  display: flex;
  flex-direction: column;
}
.manage { left: 248px; top: 216px; width: 940px; height: 705px; }
.manage-title {
  height: 47px;
  flex: none;
  background: #fff;
  display: flex;
  align-items: center;
  padding-left: 13px;
  font-size: 19.300px;
  color: #8a8a8a;
}
.manage-body { flex: 1; display: flex; flex-direction: column; padding: 10px 10px 0 11px; background: #efefef; }
.mtabs { display: flex; height: 30px; align-items: flex-end; }
.mtab {
  height: 26px;
  box-sizing: border-box;
  padding-left: 7px;
  font: 15px/26px "Liberation Mono", monospace;
  white-space: nowrap;
  color: #1a1a1a;
  border-right: 2px solid #888;
  border-left: 1px solid #fff;
  border-top: 1px solid #fff;
  border-bottom: 2px solid #fff;
}
.mtab.active { height: 30px; padding-left: 9px; line-height: 29px; border-bottom-color: #efefef; background: #efefef; }
.mtab:nth-child(3) { padding-left: 10px; }
.mtab:nth-child(4) { padding-left: 9px; }
.mtab-rest { flex: 1; height: 2px; background: #fff; }
.mpane {
  height: 563px;
  flex: none;
  box-sizing: border-box;
  padding: 55px 0 0 33px;
  border-right: 2px solid #888;
  border-bottom: 2px solid #888;
  border-left: 1px solid #fff;
}
.cols { display: grid; grid-template-columns: repeat(3, 277px); column-gap: 9px; }
.col-head {
  height: 32px;
  display: flex;
  align-items: center;
  justify-content: space-between;
  box-sizing: border-box;
  border-top: 2px solid #999;
  border-left: 1px solid #999;
  border-bottom: 1px solid #fff;
  padding-left: 2px;
  font-size: 15.500px;
}
.col-head > span { padding-top: 2px; }
.col-btns { display: flex; height: 100%; }
.col-btns b {
  width: 32.500px;
  box-sizing: border-box;
  display: flex;
  align-items: center;
  justify-content: center;
  border-right: 1px solid #bbb;
  border-bottom: 1px solid #bbb;
  border-left: 1px solid #fff;
}
.col-btns b.del .ic-b { margin-right: 5px; }
.ic-b { width: 22px; height: 22px; }
.list {
  list-style: none;
  margin: 5px 0 0;
  padding: 0;
  height: 371px;
  box-sizing: border-box;
  background: #fff;
  border-top: 2px solid #777;
  border-left: 2px solid #777;
  border-right: 1px solid #ddd;
  border-bottom: 1px solid #fff;
}
.list li {
  height: 19.500px;
  line-height: 21px;
  padding-left: 1px;
  font-size: 16px;
  white-space: nowrap;
  position: relative;
}
.list li.sel { background: #0078d7; color: #fff; z-index: 1; }
.btn {
  background: #efefef;
  border: solid;
  border-width: 1px 2px 2px 1px;
  border-color: #fff #868686 #868686 #fff;
  box-sizing: border-box;
  font: 15.500px "Liberation Sans", sans-serif;
  color: #222;
  padding: 0;
}
.set { margin: 10px 0 0 24px; width: 228px; height: 33px; }
.addf { margin: 10px 0 0 24px; width: 226px; height: 33px; }
.mfoot { display: flex; padding-top: 10px; height: 36px; box-sizing: content-box; }
.mono { font: 15px "Liberation Mono", monospace; height: 36px; }
.ok { margin-left: 317px; width: 133px; }
.cancel { margin-left: 17px; width: 138px; }
.help { margin-left: 177px; width: 138px; }

.addwin { left: 1106px; top: 210px; width: 763px; height: 553px; border-top: 1px solid #555; border-left: 1px solid #777; }
.add-title {
  height: 46px;
  flex: none;
  background: #fff;
  display: flex;
  align-items: center;
  padding-left: 13px;
  font-size: 19.800px;
  color: #1a1a1a;
}
.uv { width: 22px; height: 22px; margin-right: 6px; }
.close-x { width: 16px; height: 16px; margin-left: auto; margin-right: 17px; }
.add-body { flex: 1; display: flex; flex-direction: column; position: relative; }
.look { display: flex; align-items: center; height: 35px; margin-top: 10px; padding-left: 18px; font-size: 18px; }
.look label { width: 134px; flex: none; padding-top: 8px; white-space: nowrap; }
.look-box {
  width: 358px;
  height: 35px;
  flex: none;
  position: relative;
  display: flex;
  align-items: center;
  box-sizing: border-box;
  background: #fff;
  border-top: 3px solid #888;
  padding-left: 10px;
  font-size: 18px;
  margin-right: 22px;
}
.yellow { width: 18px; height: 24px; background: #fcdf8a; margin-right: 9px; border-radius: 1px; }
.arrow-btn {
  position: absolute;
  right: 1px;
  top: 2px;
  bottom: 1px;
  width: 23px;
  background: #efefef;
  border: solid;
  border-width: 1px 2px 2px 1px;
  border-color: #fff #888 #888 #fff;
  box-sizing: border-box;
  display: flex;
  align-items: center;
  justify-content: center;
}
.arrow-btn em { width: 0; height: 0; border: 5px solid transparent; border-top: 6px solid #111; border-bottom: 0; }
.ic-n { width: 24px; height: 24px; margin-right: 10.500px; flex: none; margin-top: -6px; }
.tri-d { width: 0; height: 0; border: 7px solid transparent; border-top: 8px solid #111; border-bottom: 0; margin: -10px 0 0 -8px; }
.files {
  margin: 30px 0 0 11px;
  width: 731px;
  height: 237px;
  flex: none;
  background: #fff;
  overflow: hidden;
  display: flex;
  flex-direction: column;
  font-size: 17.500px;
}
.fhead, .frow { display: grid; grid-template-columns: 457px 243px 31px; flex: none; white-space: nowrap; }
.fhead { height: 36px; align-items: center; font-size: 18px; color: #333; }
.frow { height: 31.500px; align-items: center; background: #cce8ff; }
.ftxt { padding-top: 3px; }
.c1 { padding-left: 8px; display: flex; align-items: center; position: relative; height: 100%; border-right: 1px solid #e8eff5; box-sizing: border-box; }
.c2 { padding-left: 10px; height: 100%; display: flex; align-items: center; border-right: 1px solid #e8eff5; box-sizing: border-box; }
.c3 { padding-left: 9px; overflow: hidden; }
.caret { position: absolute; left: 224px; top: 2px; width: 12px; height: 7px; }
.fic { width: 24px; height: 24px; margin: 0 3px 0 3px; flex: none; }
.fempty { flex: 1; display: grid; grid-template-columns: 457px 243px; }
.fempty i { border-right: 1px solid #e8eff5; }
.hbar { margin-left: 11px; width: 731px; height: 23px; flex: none; display: flex; align-items: center; font-size: 24px; line-height: 20px; color: #555; font-weight: 700; }
.hbar span { width: 25px; text-align: center; flex: none; }
.hbar b { width: 479px; height: 23px; background: #cdcdcd; margin-right: auto; }
.form { display: flex; padding: 11px 0 0 13px; }
.form-left { width: 560px; padding-top: 4px; flex: none; font-size: 18px; }
.form-right { display: flex; flex-direction: column; gap: 17px; margin-left: 29px; }
.frm { display: flex; }
.frm label { width: 142px; flex: none; padding-top: 5px; white-space: nowrap; }
.frm.second { margin-top: 14px; }
.frm.second label { padding-top: 2px; }
.input {
  width: 418px;
  height: 41px;
  box-sizing: border-box;
  background: #fff;
  border-top: 2px solid #777;
  border-left: 2px solid #777;
  padding: 6px 0 0 3px;
  font-size: 19px;
}
.select {
  position: relative;
  width: 418px;
  height: 32px;
  box-sizing: border-box;
  background: #fff;
  border-left: 2px solid #777;
  padding-left: 4px;
  font-size: 18px;
  line-height: 32px;
  letter-spacing: .5px;
}
.select .arrow-btn { top: 0; bottom: 0; right: 2px; width: 25px; }
.big { width: 131px; height: 48px; font-size: 18.500px; }
.add { padding-top: 8px; }
.grip { position: absolute; right: 0; bottom: 0; width: 16px; height: 16px; }

.rbox {
  position: absolute;
  box-sizing: border-box;
  border: 4px solid #fa2016;
  border-radius: 3px;
}
.rnum {
  position: absolute;
  box-sizing: border-box;
  border: 2.500px solid #fa2016;
  border-radius: 50%;
  color: #fa2016;
  font-size: 30px;
  display: flex;
  align-items: center;
  justify-content: center;
}
</style>
